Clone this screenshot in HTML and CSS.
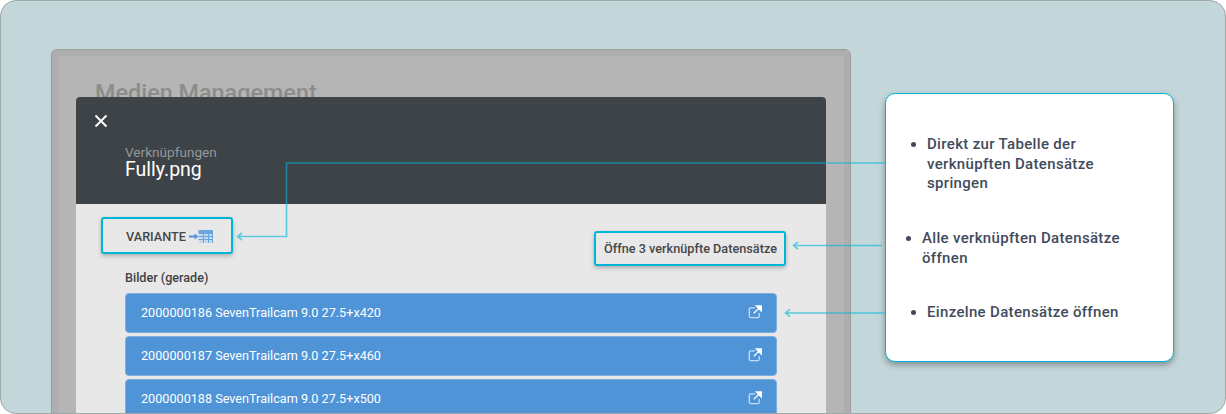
FILE: index.html
```html
<!DOCTYPE html>
<html lang="de">
<head>
<meta charset="utf-8">
<title>Medien Management</title>
<link rel="stylesheet" href="styles.css">
</head>
<body>
<div class="frame">
  <section class="screen">
    <div class="page-title"><h1>Medien Management</h1></div>
    <div class="modal">
      <header class="modal-head">
        <svg class="close" viewBox="0 0 14 14" width="14" height="14"><path d="M1.500 1.500l11 11M12.500 1.500l-11 11"/></svg>
        <div class="eyebrow">Verknüpfungen</div>
        <div class="filename">Fully.png</div>
      </header>
      <div class="modal-body">
        <div class="top-row">
          <div class="variant">
            <span>VARIANTE</span>
            <svg class="table-icon" viewBox="0 0 24 14" width="24" height="14">
              <path class="arrow" d="M0 7.500h6"/>
              <path class="arrow-head" d="M5.500 4.500l4 3-4 3z"/>
              <rect class="tbl-fill" x="9.500" y="1" width="15" height="13"/>
              <path class="tbl-head" d="M9.500 1h15v3h-15z"/>
              <path class="tbl-grid" d="M9.500 4.500h15M9.500 7.500h15M9.500 10.500h15M14.500 1v13M19.500 1v13M23.500 1v13"/>
            </svg>
          </div>
          <div class="open-all">Öffne 3 verknüpfte Datensätze</div>
        </div>
        <div class="section-label">Bilder (gerade)</div>
        <div class="rows">
          <div class="row"><span>2000000186 SevenTrailcam 9.0 27.5+x420</span><svg class="ext" viewBox="0 0 14 14" width="14" height="14"><path class="ext-box" d="M7 2.800H2.800A1.500 1.500 0 0 0 1.300 4.300v6.900a1.500 1.500 0 0 0 1.500 1.500h6.900a1.500 1.500 0 0 0 1.500-1.500V8"/><path class="ext-arrow" d="M5.800 8.300L11.500 2.600M8.300 1h5v5l-1.800-1.700-1.800-1.700z"/></svg></div>
          <div class="row"><span>2000000187 SevenTrailcam 9.0 27.5+x460</span><svg class="ext" viewBox="0 0 14 14" width="14" height="14"><path class="ext-box" d="M7 2.800H2.800A1.500 1.500 0 0 0 1.300 4.300v6.900a1.500 1.500 0 0 0 1.500 1.500h6.900a1.500 1.500 0 0 0 1.500-1.500V8"/><path class="ext-arrow" d="M5.800 8.300L11.500 2.600M8.300 1h5v5l-1.800-1.700-1.800-1.700z"/></svg></div>
          <div class="row"><span>2000000188 SevenTrailcam 9.0 27.5+x500</span><svg class="ext" viewBox="0 0 14 14" width="14" height="14"><path class="ext-box" d="M7 2.800H2.800A1.500 1.500 0 0 0 1.300 4.300v6.900a1.500 1.500 0 0 0 1.500 1.500h6.900a1.500 1.500 0 0 0 1.500-1.500V8"/><path class="ext-arrow" d="M5.800 8.300L11.500 2.600M8.300 1h5v5l-1.800-1.700-1.800-1.700z"/></svg></div>
        </div>
      </div>
    </div>
  </section>
  <aside class="card">
    <ul class="notes notes-a"><li>Direkt zur Tabelle der verknüpften Datensätze springen</li></ul>
    <ul class="notes notes-b"><li>Alle verknüpften Datensätze öffnen</li></ul>
    <ul class="notes notes-c"><li>Einzelne Datensätze öffnen</li></ul>
  </aside>
  <svg class="connectors" viewBox="0 0 1226 414" width="1226" height="414">
    <path d="M885 163H286.500V236.500H238M242 232.800l-4.500 3.700 4.500 3.700"/>
    <path d="M882 245.500H794M798 241.800l-4.500 3.700 4.500 3.700"/>
    <path d="M885 313H786M790 309.300l-4.500 3.700 4.500 3.700"/>
  </svg>
</div>
</body>
</html>
```
FILE: styles.css
```css
* { box-sizing: border-box; }
html, body { margin: 0; padding: 0; height: 100%; }
body { background: #fff; font-family: Roboto, "Liberation Sans", sans-serif; overflow: hidden; }

.frame {
  position: relative;
  display: flex;
  align-items: flex-start;
  width: 1226px;
  height: 414px;
  padding: 48px 0 0 50px;
  background: #c3d7da;
  border: 1px solid #9fa9aa;
  border-radius: 16px;
  overflow: hidden;
}

.screen {
  flex: none;
  width: 800px;
  height: 400px;
  padding: 0 24px;
  background: #b5b5b5;
  border: 1px solid #9d9d9d;
  border-radius: 6px 6px 0 0;
  box-shadow: inset 0 0 0 6px #aeaeae;
}

.page-title { height: 47px; padding: 28px 0 0 19px; overflow: hidden; }
.page-title h1 {
  margin: 0;
  font-size: 23.400px;
  line-height: 30px;
  font-weight: 500;
  color: #8c8c8c;
  white-space: nowrap;
}

.modal { width: 750px; height: 330px; border-radius: 4px 4px 0 0; background: #e8e8e8; overflow: hidden; }

.modal-head {
  height: 107px;
  padding: 17px 0 0 49px;
  background: #3e4347;
  color: #fff;
}
.close { display: block; margin: 0 0 17px -31px; }
.close path { fill: none; stroke: #fff; stroke-width: 1.900; }
.eyebrow { font-size: 13.600px; line-height: 15px; color: #95989a; }
.filename { font-size: 19.500px; line-height: 20px; color: #fff; }

.modal-body { padding: 13px 49px 0; }

.top-row { display: flex; align-items: flex-start; justify-content: space-between; height: 54px; margin: 0 -9px 0 -24px; }

.variant {
  display: flex;
  align-items: center;
  gap: 3px;
  width: 132px;
  height: 37px;
  padding: 1px 0 0 23px;
  font-size: 12.700px;
  font-weight: 500;
  color: #444749;
  border: 2px solid #00b5d8;
  border-radius: 3px;
  box-shadow: 0 2px 4px rgba(0,0,0,.25);
}
.arrow { fill: none; stroke: #4d94d8; stroke-width: 2; }
.arrow-head { fill: #4d94d8; }
.tbl-fill { fill: #c5d9ef; }
.tbl-head { fill: #6ea6e0; }
.tbl-grid { fill: none; stroke: #6ba3dd; stroke-width: 1; }

.open-all {
  margin-top: 14px;
  width: 192px;
  height: 35px;
  padding-left: 8px;
  font-size: 12.700px;
  line-height: 31px;
  font-weight: 500;
  color: #444749;
  border: 2px solid #00b5d8;
  border-radius: 3px;
  box-shadow: 0 2px 4px rgba(0,0,0,.25);
  white-space: nowrap;
}

.section-label { font-size: 12.600px; line-height: 14px; font-weight: 500; color: #3f4244; margin-bottom: 8px; }

.rows { display: flex; flex-direction: column; gap: 3px; }
.row {
  display: flex;
  align-items: center;
  justify-content: space-between;
  height: 40px;
  padding: 0 14px 0 15px;
  font-size: 12.650px;
  color: #fff;
  background: #5094d8;
  border: 1px solid #7dade0;
  border-radius: 4px;
}
.row span { margin-top: -1px; }
.ext { margin-top: -2px; }
.ext-box { fill: none; stroke: #c6dcf3; stroke-width: 1.300; }
.ext-arrow { fill: #fff; stroke: #fff; stroke-width: 1.300; }

.card {
  flex: none;
  width: 289px;
  height: 269px;
  margin: 44px 0 0 34px;
  padding: 41px 0 0;
  background: #fff;
  border: 1px solid #00b5d8;
  border-radius: 10px;
  box-shadow: 0 3px 6px rgba(0,0,0,.35);
}
.notes {
  margin: 0;
  font-size: 15px;
  letter-spacing: .33px;
  line-height: 19.500px;
  font-weight: 500;
  color: #424b5c;
}
.notes-a { padding: 0 60px 0 41px; height: 94px; }
.notes-b { padding: 0 40px 0 36px; height: 74px; }
.notes-c { padding: 0 20px 0 41px; }

.connectors { position: absolute; left: -1px; top: -1px; pointer-events: none; }
.connectors path { fill: none; stroke: rgba(0,181,216,.6); stroke-width: 1.700; }
```
